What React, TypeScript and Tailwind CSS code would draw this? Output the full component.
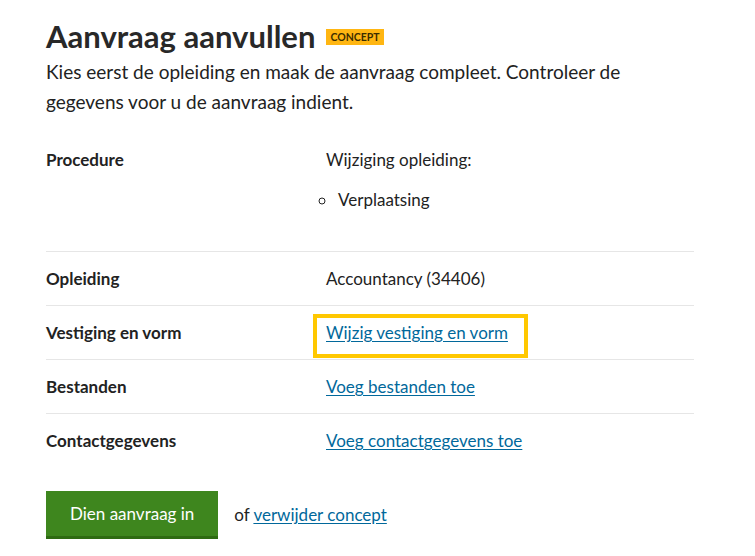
import React from "react";

const rows = [
  { label: "Opleiding", value: <span>Accountancy (34406)</span> },
  {
    label: "Vestiging en vorm",
    value: (
      <span className="relative inline-block">
        <span className="absolute -left-[13px] -right-[20px] -top-[5px] -bottom-[12px] border-4 border-[#ffc800]"></span>
        <a href="#" className="relative text-[#01689b] underline underline-offset-2">
          Wijzig vestiging en vorm
        </a>
      </span>
    ),
  },
  {
    label: "Bestanden",
    value: (
      <a href="#" className="text-[#01689b] underline underline-offset-2">
        Voeg bestanden toe
      </a>
    ),
  },
  {
    label: "Contactgegevens",
    value: (
      <a href="#" className="text-[#01689b] underline underline-offset-2">
        Voeg contactgegevens toe
      </a>
    ),
  },
];

const App = () => {
  return (
    <div className="min-h-[556px] bg-white font-['Lato',sans-serif] text-[#222]">
      <div className="pl-[46px] pr-[61px] pt-[16px]">
        <div className="flex items-center gap-[11px]">
          <h1 className="text-[31px] font-bold leading-[40px] text-[#282828]">Aanvraag aanvullen</h1>
          <span className="mt-[2px] bg-[#ffb612] px-[4px] text-[10.5px] font-bold leading-[16px] text-[#3b2d00]">
            CONCEPT
          </span>
        </div>
        <p className="mt-[1px] text-[19px] leading-[30px]">
          Kies eerst de opleiding en maak de aanvraag compleet. Controleer de gegevens voor u de aanvraag indient.
        </p>

        <div className="mt-[15px] text-[17px]">
          <div className="flex border-b border-[#e6e6e6] pt-[14px] pb-[15px]">
            <div className="w-[280px] font-bold leading-[27px]">Procedure</div>
            <div className="flex-1 leading-[27px]">
              <p>Wijziging opleiding:</p>
              <ul className="mt-[13px] mb-[23px] list-[circle] pl-[11px]">
                <li className="pl-[1px]">Verplaatsing</li>
              </ul>
            </div>
          </div>
          {rows.map((row, i) => (
            <div
              key={row.label}
              className={
                i < rows.length - 1
                  ? "flex border-b border-[#e6e6e6] py-[13px] leading-[27px]"
                  : "flex py-[13px] leading-[27px]"
              }
            >
              <div className="w-[280px] font-bold">{row.label}</div>
              <div className="flex-1">{row.value}</div>
            </div>
          ))}
        </div>

        <div className="mt-[24px] flex items-center gap-[16px]">
          <button className="h-[48px] border-b-[3px] border-[#2e6b12] bg-[#3e861e] px-[24px] text-[17px] text-white">
            Dien aanvraag in
          </button>
          <span className="text-[17px]">
            of{" "}
            <a href="#" className="text-[#01689b] underline underline-offset-2">
              verwijder concept
            </a>
          </span>
        </div>
      </div>
    </div>
  );
};

export default App;
